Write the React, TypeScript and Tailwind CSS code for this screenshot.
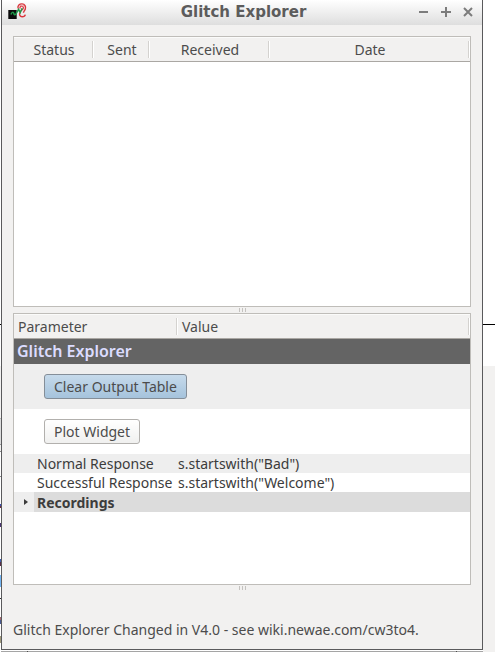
import React from "react";

const backdrop = [
  { height: 324, color: "bg-white" },
  { height: 1, color: "bg-black" },
  { height: 41, color: "bg-white" },
  { height: 52, color: "bg-[#f2f1f0]" },
  { height: 1, color: "bg-[#b8b8b8]" },
  { height: 25, color: "bg-[#dcdcdc]" },
  { height: 1, color: "bg-[#9a9a9a]" },
  { height: 6, color: "bg-[#f2f1f0]" },
  { height: 1, color: "bg-[#8a8a8a]" },
  { height: 24, color: "bg-white" },
  { height: 1, color: "bg-[#8a8a8a]" },
  { height: 27, color: "bg-white" },
  { height: 2, color: "bg-[#3a4fb0]" },
  { height: 2, color: "bg-[#6a3040]" },
  { height: 15, color: "bg-white" },
  { height: 4, color: "bg-[#4a3570]" },
  { height: 32, color: "bg-white" },
  { height: 3, color: "bg-[#3f5fae]" },
  { height: 4, color: "bg-[#5a3048]" },
  { height: 9, color: "bg-white" },
  { height: 12, color: "bg-[#73b5f2]" },
  { height: 11, color: "bg-white" },
  { height: 1, color: "bg-[#333333]" },
  { height: 18, color: "bg-white" },
  { height: 3, color: "bg-[#a06a70]" },
  { height: 4, color: "bg-[#4a5a90]" },
  { height: 12, color: "bg-white" },
  { height: 7, color: "bg-[#a09a7c]" },
];

function ChipEarIcon() {
  return (
    <svg width="20" height="17" viewBox="0 0 20 17" fill="none" aria-hidden="true">
      <rect x="0.3" y="7" width="8.4" height="9" fill="#0c0c0c" />
      <path d="M10 5.5C9.5 2.5 11.5 0.8 14 0.9C17 1 18 3.5 17.3 6C16.8 7.8 15.5 8.3 15.5 9.8" stroke="#d9353c" strokeWidth="1.4" />
      <path d="M11.8 5.5C11.8 2.6 15.5 2.4 15.4 5C15.3 6.8 13.6 6.8 12.6 8.2" stroke="#d9353c" strokeWidth="1.2" />
      <path d="M12 9.5C10.8 11.5 12 13.9 14.2 13.8C16 13.8 17 13 17.3 11.6" stroke="#d9353c" strokeWidth="1.4" />
      <path d="M12 2.4L14.8 4M14.4 1.8L16.6 3.6M10.8 4L13.4 5.6" stroke="#e87c80" strokeWidth="0.8" />
      <path d="M3 11.5C3.5 9 5.5 8.6 5.8 10.5C6.1 12 7 12.4 8 10.8L10.6 6.4L12.2 9.6L14.2 5.2" stroke="#1d9a4a" strokeWidth="1.5" />
    </svg>
  );
}

function WindowButton({ label, path }: { label: string; path: string }) {
  return (
    <button type="button" aria-label={label} className="flex h-5 w-[22px] items-center justify-center text-[#7c7c7c]">
      <svg width="10" height="10" viewBox="0 0 10 10" fill="none" stroke="currentColor" strokeWidth="2" aria-hidden="true">
        <path d={path} />
      </svg>
    </button>
  );
}

function SplitHandle() {
  return (
    <div role="separator" className="flex h-[6px] items-center justify-center gap-[2px]">
      <span className="h-1 w-px bg-[#c4c2bf]" />
      <span className="h-1 w-px bg-[#c4c2bf]" />
      <span className="h-1 w-px bg-[#c4c2bf]" />
    </div>
  );
}

function HeaderCell({ children, left = false }: { children: React.ReactNode; left?: boolean }) {
  return (
    <th scope="col" className="border-b border-[#aaa7a3] p-0 font-normal">
      <div className="flex h-6 items-center border-t border-[#fbfbfa]">
        <span className={left ? "flex-1 pl-1 text-left" : "flex-1 pl-[2px] text-center"}>{children}</span>
        <span className="h-[17px] w-[2px] border-r border-l border-r-white border-l-[#d4d2cf]" />
      </div>
    </th>
  );
}

function ResponseRow({ name, value, shaded = false }: { name: string; value: string; shaded?: boolean }) {
  return (
    <tr className={shaded ? "bg-[#eeeeee]" : "bg-white"}>
      <th scope="row" className="h-[19px] p-0 pl-[23px] text-left font-normal whitespace-nowrap">{name}</th>
      <td className="p-0 whitespace-nowrap">{value}</td>
    </tr>
  );
}

export default function App() {
  return (
    <div className="flex min-h-screen bg-white font-['Noto_Sans','Open_Sans',sans-serif] text-sm leading-[18px] text-[#4c4c4c]">
      <div className="flex w-px shrink-0 flex-col" aria-hidden="true">
        {backdrop.map((part, index) => (
          <span key={index} className={part.color} style={{ height: part.height }} />
        ))}
      </div>

      <div className="flex min-w-0 flex-1 flex-col">
        <main className="flex flex-1 flex-col border-x border-b border-[#5a5a5c] bg-[#f2f1f0]">
          <header className="flex h-[25px] shrink-0 items-center bg-linear-to-b from-white to-[#dedede] pr-[3px] pb-[2px] pl-[6px]">
            <div className="flex w-[66px] items-center">
              <ChipEarIcon />
            </div>
            <h1 className="flex-1 text-center font-['DejaVu_Sans',sans-serif] text-[15px] font-bold text-[#5c5c5c]">Glitch Explorer</h1>
            <div className="flex">
              <WindowButton label="Minimize" path="M0 5H9" />
              <WindowButton label="Maximize" path="M0 5H10M5 0V10" />
              <WindowButton label="Close" path="M1 1L9 9M9 1L1 9" />
            </div>
          </header>

          <div className="flex flex-1 flex-col px-[11px] pt-[11px]">
            <section className="h-[271px] border border-[#bfbdb9] bg-white">
              <table className="w-full table-fixed border-separate border-spacing-0 bg-[#f2f1f0]">
                <colgroup>
                  <col className="w-20" />
                  <col className="w-14" />
                  <col className="w-[120px]" />
                  <col />
                </colgroup>
                <thead>
                  <tr>
                    <HeaderCell>Status</HeaderCell>
                    <HeaderCell>Sent</HeaderCell>
                    <HeaderCell>Received</HeaderCell>
                    <HeaderCell>Date</HeaderCell>
                  </tr>
                </thead>
              </table>
            </section>

            <SplitHandle />

            <section className="h-[272px] border border-[#bfbdb9] bg-white">
              <table className="w-full table-fixed border-separate border-spacing-0 text-[#3c3c3c]">
                <colgroup>
                  <col className="w-[164px]" />
                  <col />
                </colgroup>
                <thead className="bg-[#f2f1f0] text-[#4c4c4c]">
                  <tr>
                    <HeaderCell left>Parameter</HeaderCell>
                    <HeaderCell left>Value</HeaderCell>
                  </tr>
                </thead>
                <tbody>
                  <tr className="bg-[#646464]">
                    <th scope="rowgroup" colSpan={2} className="h-[25px] p-0 pb-px pl-[3px] text-left text-base leading-5 font-semibold text-[#dcdcff]">
                      Glitch Explorer
                    </th>
                  </tr>
                  <tr className="bg-[#eeeeee]">
                    <td colSpan={2} className="h-[45px] p-0 pl-[30px]">
                      <button type="button" className="block h-[25px] rounded-[3px] border border-[#848e98] bg-linear-to-b from-[#c6daeb] to-[#a5c3dc] px-[9px] text-[#4c4c4c]">
                        Clear Output Table
                      </button>
                    </td>
                  </tr>
                  <tr>
                    <td colSpan={2} className="h-[45px] p-0 pl-[30px]">
                      <button type="button" className="block h-[25px] rounded-[3px] border border-[#b2b0ad] bg-linear-to-b from-white to-[#f0f0ef] px-[9px] text-[#4c4c4c]">
                        Plot Widget
                      </button>
                    </td>
                  </tr>
                  <ResponseRow name="Normal Response" value={'s.startswith("Bad")'} shaded />
                  <ResponseRow name="Successful Response" value={'s.startswith("Welcome")'} />
                  <tr>
                    <th scope="row" colSpan={2} className="p-0 text-left">
                      <div className="flex h-5 items-stretch">
                        <button type="button" aria-label="Expand Recordings" className="flex w-5 items-center justify-center bg-[#eeeeee] pl-1">
                          <svg width="4" height="6" viewBox="0 0 4 6" fill="#3c3c3c" aria-hidden="true">
                            <path d="M0 0L4 3L0 6Z" />
                          </svg>
                        </button>
                        <span className="flex-1 bg-[#dcdcdc] pt-[2px] pl-[3px] font-bold">Recordings</span>
                      </div>
                    </th>
                  </tr>
                </tbody>
              </table>
            </section>

            <SplitHandle />

            <p className="mt-[30px] whitespace-nowrap">Glitch Explorer Changed in V4.0 - see wiki.newae.com/cw3to4.</p>
          </div>
        </main>
        <div className="flex h-[2px] shrink-0 justify-between border-t border-white bg-[#a5a5a5] px-[26px]" aria-hidden="true">
          <span className="h-px w-px bg-[#4c4c4c]" />
          <span className="h-px w-px bg-[#4c4c4c]" />
        </div>
      </div>

      <div className="flex w-3 shrink-0 flex-col" aria-hidden="true">
        <span className="h-[324px] bg-white" />
        <span className="h-px bg-black" />
        <span className="h-[41px] bg-white" />
        <span className="flex-1 bg-[#f2f1f0]" />
      </div>
    </div>
  );
}
